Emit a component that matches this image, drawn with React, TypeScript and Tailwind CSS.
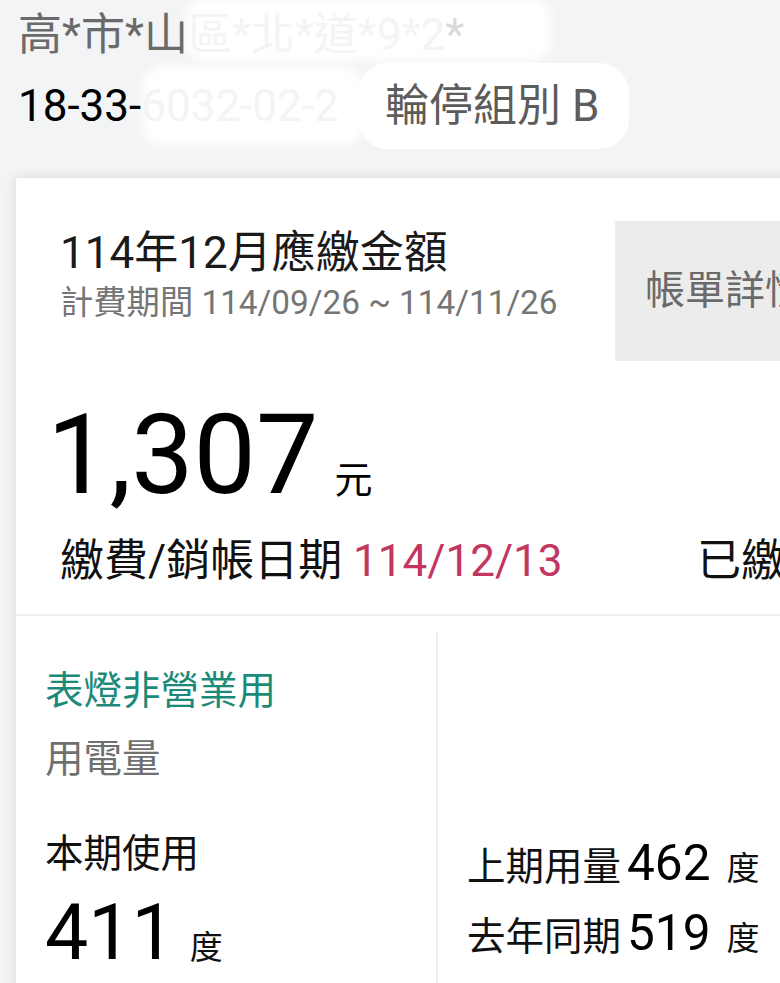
import React from "react";

const FONT = "font-['Roboto','Noto_Sans_CJK_TC',sans-serif]";

function AddressLine() {
  return (
    <div className="relative ml-[18px] mt-[9px] h-[52px] text-[44px] leading-[52px] text-[#6a6a6a] whitespace-nowrap">
      {/* soft white masking behind the hidden part of the address */}
      <div className="absolute left-[168px] top-[-12px] h-[64px] w-[364px] rounded-[18px] bg-white/95 blur-[5px]" />
      <span className="relative">高*市*山</span>
      <span className="relative text-[#f4f4f4]">區*北*道*9*2</span>
      <span className="relative text-[#d9d9d9]">*</span>
    </div>
  );
}

function MeterLine() {
  return (
    <div className="ml-[18px] mt-[2px] flex items-center">
      <div className="relative w-[340px] text-[44px] leading-[52px] text-black whitespace-nowrap">
        <div className="absolute left-[124px] top-[-14px] h-[80px] w-[222px] rounded-[22px] bg-white/95 blur-[5px]" />
        <span className="relative">18-33-</span>
        <span className="relative text-[#f4f4f4]">6032-02-2</span>
      </div>
      <div className="rounded-[30px] bg-white py-[17px] pl-[27px] pr-[30px] text-[44px] leading-[52px] text-[#5c5c5c]">
        輪停組別 B
      </div>
    </div>
  );
}

function BillHeader() {
  return (
    <div className="flex items-start">
      <div className="w-[599px] pl-[44px] pt-[6px]">
        <div className="text-[44px] leading-[52px] text-[#1a1a1a]">114年12月應繳金額</div>
        <div className="mt-[4px] text-[33.3px] leading-[40px] text-[#757575] whitespace-nowrap">
          計費期間 114/09/26 ~ 114/11/26
        </div>
      </div>
      <div className="flex h-[140px] w-[220px] items-center bg-[#ececec] pl-[30px] text-[40px] leading-[48px] text-[#6a6a6a] whitespace-nowrap">
        帳單詳情
      </div>
    </div>
  );
}

function Amount() {
  return (
    <div className="mt-[36px] flex items-baseline pl-[31px]">
      <span className="text-[111px] leading-[116px] text-black">1,307</span>
      <span className="ml-[16px] text-[38px] leading-[40px] text-black">元</span>
    </div>
  );
}

function PaidRow() {
  return (
    <div className="mt-[22px] flex text-[44px] leading-[52px] whitespace-nowrap">
      <div className="w-[681px] pl-[44px] text-[#111]">
        繳費/銷帳日期 <span className="text-[#c2365f]">114/12/13</span>
      </div>
      <div className="text-[#111]">已繳費</div>
    </div>
  );
}

function UsageRow({ label, value }: { label: string; value: string }) {
  return (
    <div className="flex items-baseline whitespace-nowrap">
      <span className="text-[38.5px] leading-[58px] text-[#111]">{label}</span>
      <span className="ml-[6px] text-[49.5px] leading-[58px] text-black">{value}</span>
      <span className="ml-[16px] text-[33px] leading-[40px] text-[#111]">度</span>
    </div>
  );
}

function Usage() {
  return (
    <div className="flex">
      <div className="w-[420px] pl-[29px] pt-[52px]">
        <div className="text-[38.5px] leading-[46px] text-[#1b8a78]">表燈非營業用</div>
        <div className="mt-[22px] text-[38.5px] leading-[46px] text-[#707070]">用電量</div>
        <div className="mt-[49px] text-[38.5px] leading-[46px] text-[#111]">本期使用</div>
        <div className="mt-[16px] flex items-baseline">
          <span className="text-[77px] leading-[80px] text-black">411</span>
          <span className="ml-[15px] text-[33px] leading-[40px] text-[#111]">度</span>
        </div>
        <div className="h-[40px]" />
      </div>
      <div className="mt-[16px] w-[2px] bg-[#ececec]" />
      <div className="flex flex-col gap-[8px] pl-[29px] pt-[218px]">
        <UsageRow label="上期用量" value="462" />
        <UsageRow label="去年同期" value="519" />
      </div>
    </div>
  );
}

export default function App() {
  return (
    <div className={`${FONT} h-[983px] w-[780px] overflow-hidden bg-[#f3f4f6]`}>
      <AddressLine />
      <MeterLine />
      <div className="ml-[16px] mt-[29px] w-[900px] bg-white shadow-[0_0_12px_rgba(0,0,0,0.12)]">
        <div className="pt-[43px]">
          <BillHeader />
        </div>
        <Amount />
        <PaidRow />
        <div className="mt-[27px] h-[2px] bg-[#eeeeee]" />
        <Usage />
      </div>
    </div>
  );
}
